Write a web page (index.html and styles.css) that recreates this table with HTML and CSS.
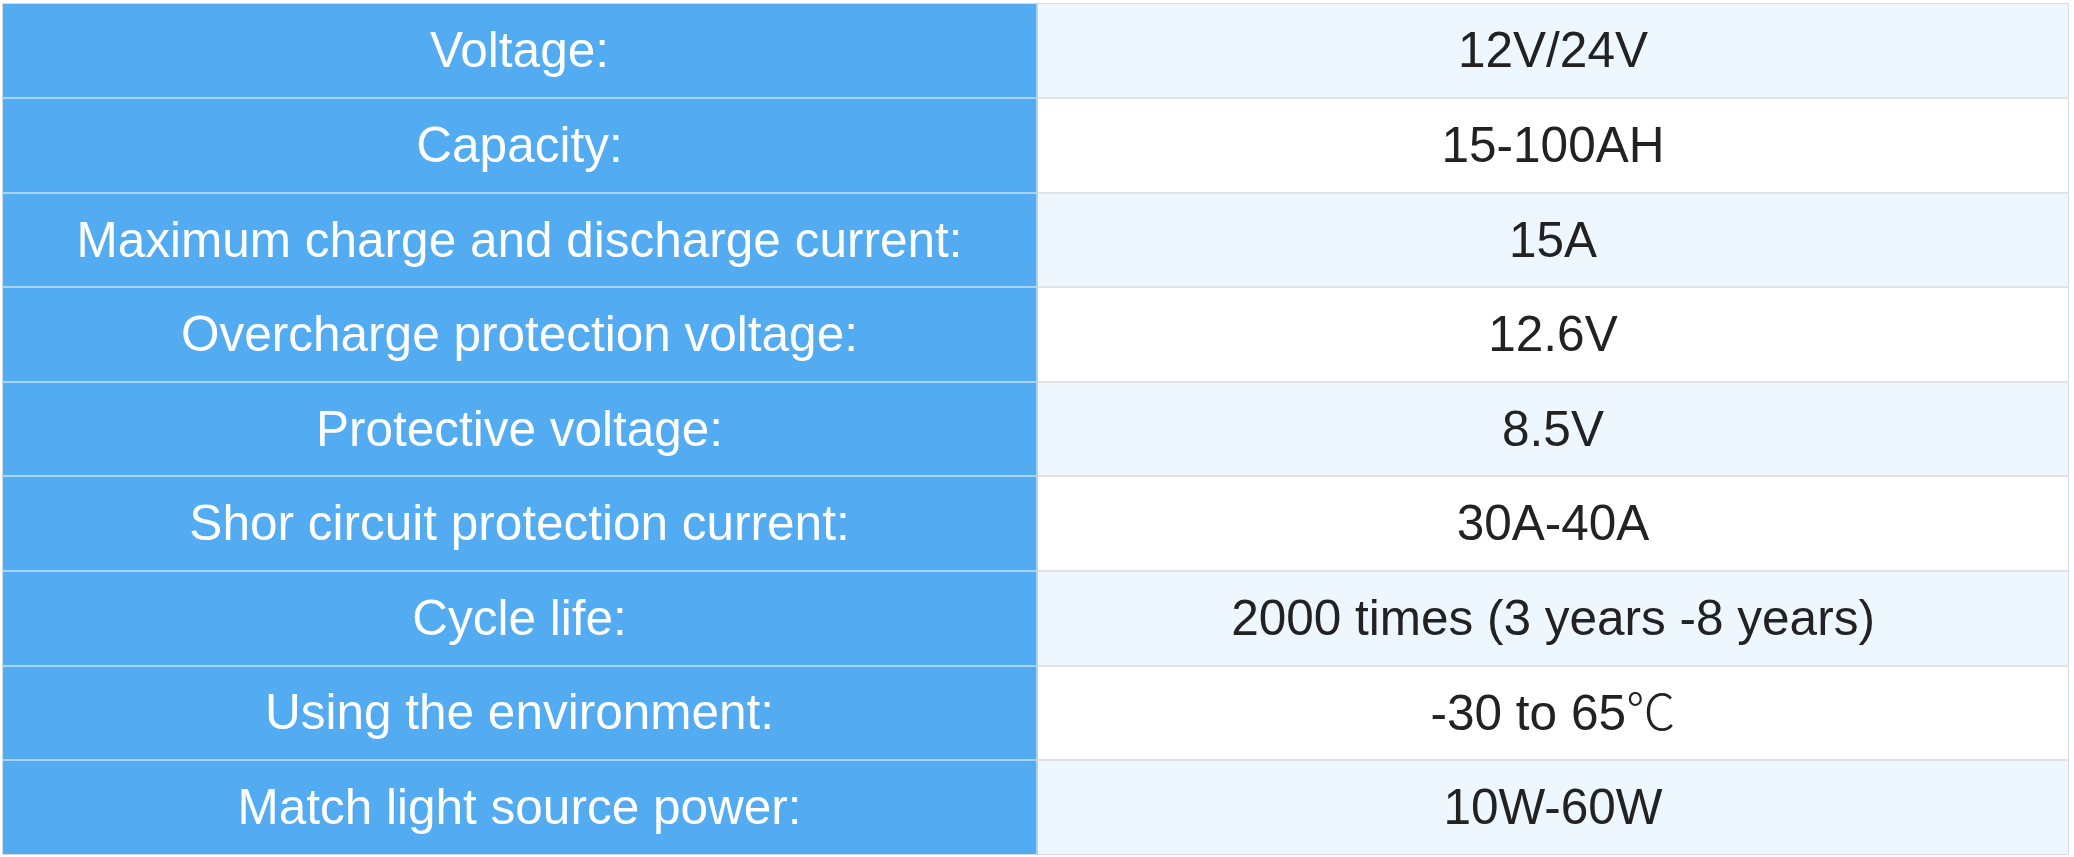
FILE: index.html
```html
<!DOCTYPE html>
<html lang="en">
<head>
<meta charset="utf-8">
<title>Specifications</title>
<link rel="stylesheet" href="styles.css">
</head>
<body>
<table class="spec">
  <tbody>
    <tr class="odd"><th>Voltage:</th><td>12V/24V</td></tr>
    <tr><th>Capacity:</th><td>15-100AH</td></tr>
    <tr class="odd"><th>Maximum charge and discharge current:</th><td>15A</td></tr>
    <tr><th>Overcharge protection voltage:</th><td>12.6V</td></tr>
    <tr class="odd"><th>Protective voltage:</th><td>8.5V</td></tr>
    <tr><th>Shor circuit protection current:</th><td>30A-40A</td></tr>
    <tr class="odd"><th>Cycle life:</th><td>2000 times (3 years -8 years)</td></tr>
    <tr><th>Using the environment:</th><td>-30 to 65<span class="deg">℃</span></td></tr>
    <tr class="odd"><th>Match light source power:</th><td>10W-60W</td></tr>
  </tbody>
</table>
</body>
</html>
```

FILE: styles.css
```css
html, body {
  margin: 0;
  padding: 0;
  background: #ffffff;
}
body {
  padding: 3px 5px 2px 2px;
  font-family: "Liberation Sans", Arial, sans-serif;
}
.spec {
  width: 2067px;
  height: 852px;
  border-collapse: collapse;
  table-layout: fixed;
  border: 1px solid #d6dbe0;
}
.spec tr {
  height: 94.6px;
}
.spec th,
.spec td {
  font-size: 49.5px;
  font-weight: normal;
  text-align: center;
  vertical-align: middle;
  padding: 0;
  line-height: 1.15;
}
.spec th {
  width: 1033px;
  background: #53abf2;
  color: #ffffff;
  border-top: 2px solid #a9d3f8;
  border-right: 2px solid #a9d3f8;
}
.spec td {
  background: #ffffff;
  color: #222222;
  border-top: 2px solid #dfe3e8;
}
.spec tr.odd td {
  background: #eef6fe;
}
.spec tr:first-child th,
.spec tr:first-child td {
  border-top: 1px solid #d6dbe0;
}
.deg {
  font-family: "Noto Sans CJK SC", "DejaVu Serif", serif;
  font-weight: 300;
  line-height: 1;
  vertical-align: baseline;
}
```
